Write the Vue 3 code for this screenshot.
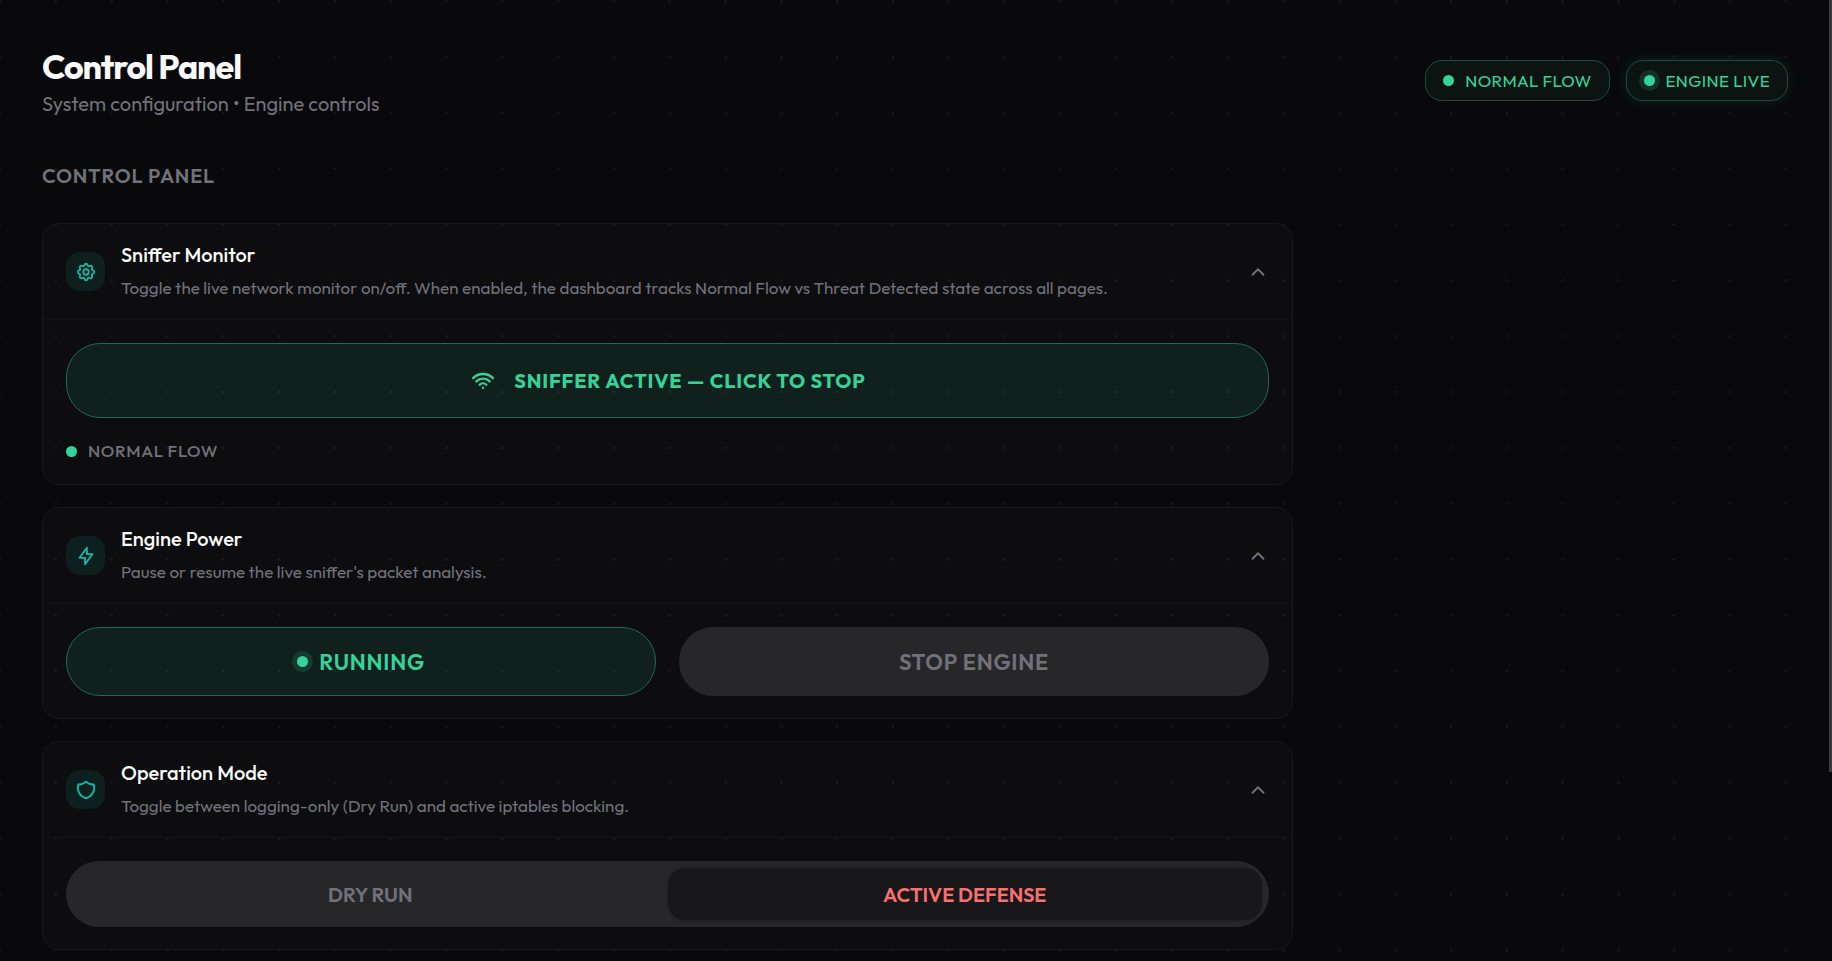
<script setup>
import { ref } from 'vue'

const mode = ref('active')
const running = ref(true)
const sniffing = ref(true)
const open = ref({ sniffer: true, engine: true, mode: true })

const cards = [
  {
    id: 'sniffer',
    title: 'Sniffer Monitor',
    text: 'Toggle the live network monitor on/off. When enabled, the dashboard tracks Normal Flow vs Threat Detected state across all pages.',
    icon: [
      'M10.325 4.317c.426 -1.756 2.924 -1.756 3.35 0a1.724 1.724 0 0 0 2.573 1.066c1.543 -.94 3.31 .826 2.37 2.37a1.724 1.724 0 0 0 1.065 2.572c1.756 .426 1.756 2.924 0 3.35a1.724 1.724 0 0 0 -1.066 2.573c.94 1.543 -.826 3.31 -2.37 2.37a1.724 1.724 0 0 0 -2.572 1.065c-.426 1.756 -2.924 1.756 -3.35 0a1.724 1.724 0 0 0 -2.573 -1.066c-1.543 .94 -3.31 -.826 -2.37 -2.37a1.724 1.724 0 0 0 -1.065 -2.572c-1.756 -.426 -1.756 -2.924 0 -3.35a1.724 1.724 0 0 0 1.066 -2.573c-.94 -1.543 .826 -3.31 2.37 -2.37c1 .608 2.296 .07 2.572 -1.065',
      'M9 12a3 3 0 1 0 6 0a3 3 0 0 0 -6 0',
    ],
  },
  {
    id: 'engine',
    title: 'Engine Power',
    text: "Pause or resume the live sniffer's packet analysis.",
    icon: ['M13 3l0 7l6 0l-8 11l0 -7l-6 0l8 -11'],
  },
  {
    id: 'mode',
    title: 'Operation Mode',
    text: 'Toggle between logging-only (Dry Run) and active iptables blocking.',
    icon: ['M12 3a12 12 0 0 0 8.5 3a12 12 0 0 1 -8.5 15a12 12 0 0 1 -8.5 -15a12 12 0 0 0 8.5 -3'],
  },
]
</script>

<template>
  <div class="page">
    <svg class="dots" viewBox="0 0 1313 720" preserveAspectRatio="xMinYMin meet" aria-hidden="true">
      <defs>
        <pattern id="grid" x="-20" y="0" width="40" height="40" patternUnits="userSpaceOnUse">
          <circle cx="20" cy="1" r="1" />
        </pattern>
      </defs>
      <rect width="1313" height="720" fill="url(#grid)" />
    </svg>

    <header class="top">
      <div>
        <h1>Control Panel</h1>
        <p class="sub">System configuration • Engine controls</p>
      </div>
      <div class="badges">
        <span class="badge"><i class="dot"></i>NORMAL FLOW</span>
        <span class="badge glow"><i class="dot halo"></i>ENGINE LIVE</span>
      </div>
    </header>

    <main>
      <h2>CONTROL PANEL</h2>

      <section v-for="card in cards" :key="card.id" class="card">
        <button class="head" type="button" :aria-expanded="open[card.id]" @click="open[card.id] = !open[card.id]">
          <span class="tile">
            <svg class="icon" viewBox="0 0 24 24"><path v-for="d in card.icon" :key="d" :d="d" /></svg>
          </span>
          <span class="labels">
            <span class="title">{{ card.title }}</span>
            <span class="desc">{{ card.text }}</span>
          </span>
          <svg class="icon chevron" viewBox="0 0 24 24"><path d="M6 15l6 -6l6 6" /></svg>
        </button>

        <div v-if="open[card.id]" class="body">
          <template v-if="card.id === 'sniffer'">
            <button class="pill on sniffer" type="button" @click="sniffing = !sniffing">
              <svg class="icon wifi" viewBox="0 0 24 24">
                <path d="M12 18l.01 0" />
                <path d="M9.172 15.172a4 4 0 0 1 5.656 0" />
                <path d="M6.343 12.343a8 8 0 0 1 11.314 0" />
                <path d="M3.515 9.515c4.686 -4.687 12.284 -4.687 17 0" />
              </svg>
              SNIFFER ACTIVE — CLICK TO STOP
            </button>
            <p class="status"><i class="dot"></i>NORMAL FLOW</p>
          </template>

          <div v-else-if="card.id === 'engine'" class="pair">
            <button class="pill on" type="button" @click="running = true"><i class="dot halo"></i>RUNNING</button>
            <button class="pill" type="button" @click="running = false">STOP ENGINE</button>
          </div>

          <div v-else class="switch">
            <button type="button" :class="{ active: mode === 'dry' }" @click="mode = 'dry'">DRY RUN</button>
            <button type="button" :class="{ active: mode === 'active' }" @click="mode = 'active'">ACTIVE DEFENSE</button>
          </div>
        </div>
      </section>
    </main>

    <div class="scroll-thumb"></div>
  </div>
</template>

<style>
html,
body {
  background: #09090b;
}
body {
  margin: 0;
}
</style>

<style scoped>
.page {
  position: relative;
  min-height: 100vh;
  box-sizing: border-box;
  padding: 47px 44px 12px 42px;
  overflow: hidden;
  color: #fafafa;
  font-family: Outfit, Lato, sans-serif;
  font-size: 17px;
}
.dots {
  position: absolute;
  top: 0;
  left: 0;
  width: 100%;
  fill: #17171a;
}
.top,
main {
  position: relative;
}
h1,
h2,
p {
  margin: 0;
}
button {
  margin: 0;
  border: 0;
  background: none;
  color: inherit;
  font: inherit;
  cursor: pointer;
}
.top {
  display: flex;
  justify-content: space-between;
  align-items: center;
}
h1 {
  font-size: 34px;
  line-height: 40px;
  font-weight: 700;
  letter-spacing: -0.03em;
}
.sub {
  font-size: 20px;
  line-height: 28px;
  margin-top: 3px;
  color: #71717a;
}
.badges {
  display: flex;
  gap: 16px;
  margin-top: -4px;
}
.badge {
  display: flex;
  align-items: center;
  gap: 11px;
  box-sizing: border-box;
  height: 41px;
  padding: 0 17px;
  border: 1px solid #1a4d3c;
  border-radius: 17px;
  background: #0c1412;
  color: #34d399;
  font-weight: 400;
  letter-spacing: 0.02em;
}
.glow {
  box-shadow: 0 0 11px rgba(52, 211, 153, 0.15);
}
.dot {
  flex: none;
  width: 11px;
  height: 11px;
  border-radius: 50%;
  background: #34d399;
}
.halo {
  box-shadow: 0 0 0 5px rgba(52, 211, 153, 0.15);
}
h2 {
  margin: 44px 0 33px;
  font-size: 20px;
  line-height: 28px;
  font-weight: 600;
  letter-spacing: 0.04em;
  color: #71717a;
}
main {
  display: flex;
  flex-direction: column;
  max-width: 1251px;
}
.card {
  border: 1px solid #18181a;
  border-radius: 17px;
  background: rgba(255, 255, 255, 0.02);
}
.card + .card {
  margin-top: 22px;
}
.head {
  display: flex;
  align-items: center;
  width: 100%;
  padding: 17px 23px;
  text-align: left;
}
.tile {
  flex: none;
  display: grid;
  place-items: center;
  width: 39px;
  height: 39px;
  border-radius: 14px;
  background: #0d1f1e;
  color: #14b8a6;
}
.icon {
  display: block;
  width: 22px;
  height: 22px;
  fill: none;
  stroke: currentColor;
  stroke-width: 2;
  stroke-linecap: round;
  stroke-linejoin: round;
}
.labels {
  flex: 1;
  display: flex;
  flex-direction: column;
  gap: 5px;
  margin-left: 16px;
}
.title {
  font-size: 20px;
  line-height: 28px;
  font-weight: 500;
}
.desc {
  line-height: 28px;
  color: #71717a;
}
.chevron {
  color: #71717a;
}
.body {
  padding: 23px 23px 22px;
  border-top: 1px solid #141416;
}
.pill {
  flex: 1;
  display: flex;
  align-items: center;
  justify-content: center;
  gap: 11px;
  box-sizing: border-box;
  height: 69px;
  padding: 0;
  border-radius: 34px;
  background: #27272a;
  color: #71717a;
  font-size: 22px;
  font-weight: 600;
  letter-spacing: 0.035em;
}
.on {
  border: 1px solid #1d6a51;
  background: rgba(52, 211, 153, 0.1);
  color: #34d399;
}
.sniffer {
  width: 100%;
  height: 75px;
  gap: 17px;
  font-size: 20px;
  font-weight: 700;
  letter-spacing: 0.04em;
}
.wifi {
  width: 28px;
  height: 28px;
}
.status {
  display: flex;
  align-items: center;
  gap: 11px;
  margin-top: 22px;
  line-height: 22px;
  font-weight: 500;
  letter-spacing: 0.04em;
  color: #71717a;
}
.pair {
  display: grid;
  grid-template-columns: 1fr 1fr;
  gap: 23px;
}
.switch {
  display: flex;
  padding: 7px;
  border-radius: 33px;
  background: #27272a;
}
.switch button {
  flex: 1;
  height: 52px;
  border-radius: 17px;
  color: #71717a;
  font-size: 20px;
  font-weight: 600;
}
.switch .active {
  background: #18181b;
  color: #f87171;
  box-shadow: 0 1px 3px rgba(0, 0, 0, 0.2);
}
.scroll-thumb {
  position: absolute;
  top: 0;
  right: 0;
  width: 3px;
  height: 772px;
  background: #3a3a3c;
}
</style>
